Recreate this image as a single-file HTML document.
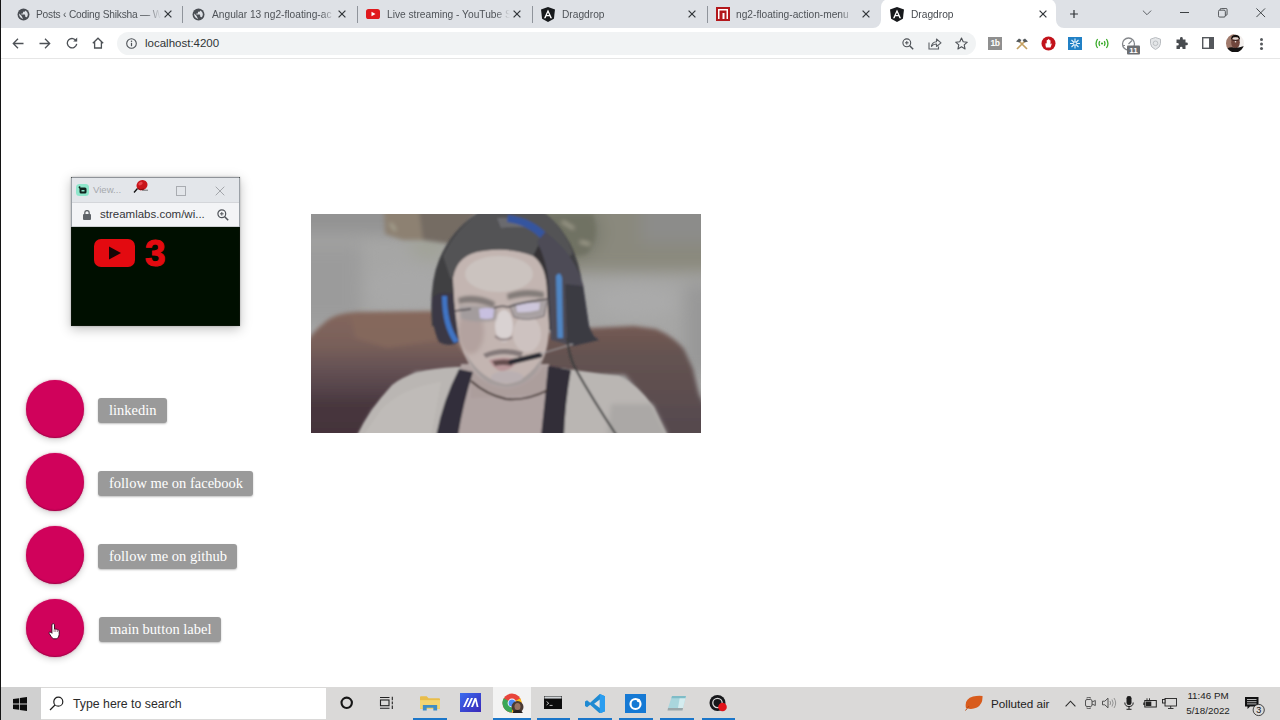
<!DOCTYPE html>
<html lang="en">
<head>
<meta charset="utf-8">
<title>Dragdrop</title>
<style>
*{box-sizing:border-box;margin:0;padding:0}
html,body{width:1280px;height:720px;overflow:hidden;background:#fff}
body{position:relative;font-family:"Liberation Sans",sans-serif;color:#3c4043}
.abs{position:absolute}
#leftline{left:0;top:0;width:1px;height:720px;background:#141414}
/* ---------- tab strip ---------- */
#tabstrip{left:0;top:0;width:1280px;height:28px;background:#dee1e6}
.tab{position:absolute;top:0;height:28px;font-size:10.200px;color:#4f5358;white-space:nowrap}
.tab .t{position:absolute;top:6.500px;left:0;overflow:hidden;height:15px;line-height:15px;-webkit-mask-image:linear-gradient(90deg,#000 calc(100% - 14px),transparent);mask-image:linear-gradient(90deg,#000 calc(100% - 14px),transparent)}
.tab .x{position:absolute;top:7px;font-size:10px;line-height:15px;color:#3c4043}
.tsep{position:absolute;top:6px;width:1px;height:17px;background:#8f949b}
#activetab{left:881px;top:-1px;width:175px;height:30px;background:#fff;border-radius:8px 8px 0 0}
/* ---------- toolbar ---------- */
#toolbar{left:0;top:28px;width:1280px;height:30px;background:#fff}
#omni{left:117px;top:32px;width:859px;height:23px;border-radius:12px;background:#f1f3f4}
#url{left:145px;top:36px;font-size:11.500px;line-height:15px;color:#303336}
#tbline{left:0;top:58px;width:1280px;height:1px;background:#e6e6e6}
/* ---------- page ---------- */
.fab{position:absolute;width:58px;height:58px;border-radius:50%;background:#d0025b;box-shadow:0 2px 7px rgba(0,0,0,.2),0 0 1.500px rgba(230,60,130,.8),inset 0 -1px 1px rgba(110,0,50,.45)}
.lbl{position:absolute;height:25px;line-height:24px;padding:0 10px 0 11px;background:#9a9a9a;color:#fff;border-radius:3px;font-family:"Liberation Serif",serif;font-size:14.500px;white-space:nowrap;box-shadow:0 1px 2px rgba(0,0,0,.25)}
/* ---------- popup ---------- */
#pop{left:71px;top:177px;width:168.500px;height:148.500px;background:#000f00;box-shadow:0 3px 11px rgba(0,0,0,.25),0 0 2px rgba(0,0,0,.25);border:1px solid #0a1408;border-top-color:#8f9399}
#poptitle{left:0;top:0;width:167px;height:24px;background:#e3e6ea}
#popurl{left:0;top:24px;width:167px;height:25px;background:#f3f4f6;border-top:1px solid #d4d6da;border-bottom:1px solid #cfd1d4}
/* ---------- taskbar ---------- */
#taskbar{left:0;top:687px;width:1280px;height:33px;background:#dad9d8}
#startbtn{left:1px;top:687px;width:40px;height:33px;background:#d0d0d0}
#search{left:41px;top:688px;width:285px;height:31px;background:#fff}
#searchtxt{left:73px;top:696px;font-size:12.300px;line-height:16px;color:#2b2b2b}
.ul{position:absolute;top:717.700px;height:2.300px;background:#1b76c9}
.tray{position:absolute;font-size:11.5px;color:#222;white-space:nowrap}
</style>
</head>
<body>
<div id="tabstrip" class="abs"></div>

<!-- tabs -->
<div id="activetab" class="abs"></div>
<svg class="abs" style="left:873px;top:20px" width="8" height="8" viewBox="0 0 8 8"><path d="M8 0V8H0A8 8 0 0 0 8 0Z" fill="#fff"/></svg>
<svg class="abs" style="left:1056px;top:20px" width="8" height="8" viewBox="0 0 8 8"><path d="M0 0V8H8A8 8 0 0 1 0 0Z" fill="#fff"/></svg>

<div class="tab" style="left:16px;width:166px">
  <svg class="abs" style="left:1px;top:8px" width="13" height="13" viewBox="0 0 24 24"><circle cx="12" cy="12" r="11" fill="#4a4e54"/><path d="M11 19.9c-3.9-.5-7-3.900-7-7.900 0-.6.100-1.200.2-1.800L9 15v1c0 1.100.9 2 2 2v1.900zm6.900-2.500c-.3-.8-1-1.400-1.900-1.400h-1v-3c0-.6-.4-1-1-1H8v-2h2c.6 0 1-.4 1-1V7h2c1.100 0 2-.9 2-2v-.4c2.900 1.200 5 4.100 5 7.400 0 2.100-.8 4-2.100 5.400z" fill="#dee1e6"/></svg>
  <span class="t" style="left:20px;width:125px;letter-spacing:-.2px">Posts ‹ Coding Shiksha — W</span>
  <svg class="abs" style="left:148px;top:10px" width="8" height="8" viewBox="0 0 8 8"><path d="M.6.600L7.400 7.400M7.400.6L.6 7.400" stroke="#33373b" stroke-width="1.250"/></svg>
</div>
<div class="tsep" style="left:182px"></div>
<div class="tab" style="left:191px;width:166px">
  <svg class="abs" style="left:1px;top:8px" width="13" height="13" viewBox="0 0 24 24"><circle cx="12" cy="12" r="11" fill="#4a4e54"/><path d="M11 19.9c-3.9-.5-7-3.900-7-7.900 0-.6.100-1.200.2-1.800L9 15v1c0 1.100.9 2 2 2v1.900zm6.900-2.500c-.3-.8-1-1.400-1.900-1.400h-1v-3c0-.6-.4-1-1-1H8v-2h2c.6 0 1-.4 1-1V7h2c1.100 0 2-.9 2-2v-.4c2.900 1.200 5 4.100 5 7.400 0 2.100-.8 4-2.100 5.400z" fill="#dee1e6"/></svg>
  <span class="t" style="left:21px;width:123px">Angular 13 ng2-floating-ac</span>
  <svg class="abs" style="left:147px;top:10px" width="8" height="8" viewBox="0 0 8 8"><path d="M.6.600L7.400 7.400M7.400.6L.6 7.400" stroke="#33373b" stroke-width="1.250"/></svg>
</div>
<div class="tsep" style="left:357px"></div>
<div class="tab" style="left:366px;width:166px">
  <svg class="abs" style="left:0;top:9px" width="14" height="10" viewBox="0 0 14 10"><rect width="14" height="10" rx="2.600" fill="#e0191d"/><path d="M5.500 2.700V7.300L9.500 5Z" fill="#fff"/></svg>
  <span class="t" style="left:21px;width:123px">Live streaming - YouTube S</span>
  <svg class="abs" style="left:147px;top:10px" width="8" height="8" viewBox="0 0 8 8"><path d="M.6.600L7.400 7.400M7.400.6L.6 7.400" stroke="#33373b" stroke-width="1.250"/></svg>
</div>
<div class="tsep" style="left:532px"></div>
<div class="tab" style="left:541px;width:166px">
  <svg class="abs" style="left:0;top:7px" width="14" height="15" viewBox="0 0 14 15"><path d="M7 0L0 2.500L1.100 11.700L7 15L12.900 11.700L14 2.500Z" fill="#17191c"/><path d="M7 2.500L3 11.300H4.600L5.400 9.300H8.600L9.400 11.300H11L7 2.500ZM7 5.500L8.100 8H5.900Z" fill="#fff"/></svg>
  <span class="t" style="left:21px;width:123px">Dragdrop</span>
  <svg class="abs" style="left:147px;top:10px" width="8" height="8" viewBox="0 0 8 8"><path d="M.6.600L7.400 7.400M7.400.6L.6 7.400" stroke="#33373b" stroke-width="1.250"/></svg>
</div>
<div class="tsep" style="left:707px"></div>
<div class="tab" style="left:716px;width:166px">
  <svg class="abs" style="left:0;top:7px" width="14" height="14" viewBox="0 0 14 14"><rect width="14" height="14" fill="#b3181c"/><rect x="2" y="2" width="10" height="10" fill="#fff"/><rect x="3.500" y="3.500" width="7" height="8.500" fill="#b3181c"/><rect x="6.500" y="6" width="2" height="6" fill="#fff"/></svg>
  <span class="t" style="left:20px;width:118px">ng2-floating-action-menu</span>
  <svg class="abs" style="left:146px;top:10px" width="8" height="8" viewBox="0 0 8 8"><path d="M.6.600L7.400 7.400M7.400.6L.6 7.400" stroke="#33373b" stroke-width="1.250"/></svg>
</div>
<div class="tab" style="left:890px;width:166px;color:#474b50">
  <svg class="abs" style="left:0;top:7px" width="14" height="15" viewBox="0 0 14 15"><path d="M7 0L0 2.500L1.100 11.700L7 15L12.900 11.700L14 2.500Z" fill="#17191c"/><path d="M7 2.500L3 11.300H4.600L5.400 9.300H8.600L9.400 11.300H11L7 2.500ZM7 5.500L8.100 8H5.900Z" fill="#fff"/></svg>
  <span class="t" style="left:21px;width:123px">Dragdrop</span>
  <svg class="abs" style="left:148.700px;top:10px" width="8" height="8" viewBox="0 0 8 8"><path d="M.6.600L7.400 7.400M7.400.6L.6 7.400" stroke="#33373b" stroke-width="1.250"/></svg>
</div>
<!-- window controls -->
<svg class="abs" style="left:1069px;top:9px" width="10" height="10" viewBox="0 0 14 14"><path d="M7 1.500V12.500M1.500 7H12.500" stroke="#2f3337" stroke-width="1.700" fill="none"/></svg>
<svg class="abs" style="left:1141.500px;top:10px" width="10" height="6" viewBox="0 0 11 7"><path d="M.7.700L5.500 5.500L10.300.7" stroke="#55595e" stroke-width="1.100" fill="none"/></svg>
<div class="abs" style="left:1180px;top:12px;width:9px;height:1px;background:#3c4043"></div>
<svg class="abs" style="left:1218px;top:8px" width="9.500" height="9.500" viewBox="0 0 11 11"><rect x=".5" y="2.500" width="8" height="8" rx="1.500" fill="none" stroke="#3c4043"/><path d="M2.500 2.500V1.800Q2.500.5 3.800.5H9.200Q10.500.5 10.500 1.800V7.200Q10.500 8.500 9.200 8.500H8.500" fill="none" stroke="#3c4043"/></svg>
<svg class="abs" style="left:1256px;top:8px" width="9.500" height="9.500" viewBox="0 0 11 11"><path d="M.5.500L10.500 10.500M10.500.5L.5 10.500" stroke="#3c4043" stroke-width="1.100" fill="none"/></svg>
<div id="toolbar" class="abs"></div>
<div id="omni" class="abs"></div>
<div id="url" class="abs">localhost:4200</div>
<div id="tbline" class="abs"></div>
<!-- toolbar icons -->
<svg class="abs" style="left:12px;top:38px" width="12" height="11" viewBox="0 0 12 11"><path d="M11.500 5.500H1.500M6 .8L1.300 5.500L6 10.200" fill="none" stroke="#4d5156" stroke-width="1.300"/></svg>
<svg class="abs" style="left:39px;top:38px" width="12" height="11" viewBox="0 0 12 11"><path d="M.5 5.500H10.500M6 .8L10.700 5.500L6 10.200" fill="none" stroke="#4d5156" stroke-width="1.300"/></svg>
<svg class="abs" style="left:66px;top:37px" width="12" height="12" viewBox="0 0 12 12"><path d="M10.300 4.200A4.700 4.700 0 1 0 10.700 6.800" fill="none" stroke="#4d5156" stroke-width="1.300"/><path d="M11.200.6V4.600H7.200Z" fill="#4d5156"/></svg>
<svg class="abs" style="left:92px;top:37px" width="12" height="12" viewBox="0 0 12 12"><path d="M.8 6.200L6 1.200L11.200 6.200M2.600 5V11H9.400V5" fill="none" stroke="#4d5156" stroke-width="1.300"/></svg>
<svg class="abs" style="left:126px;top:38px" width="11" height="11" viewBox="0 0 11 11"><circle cx="5.500" cy="5.500" r="4.800" fill="none" stroke="#4d5156" stroke-width="1.100"/><path d="M5.500 4.800V8.200" stroke="#4d5156" stroke-width="1.200"/><circle cx="5.500" cy="3.200" r=".75" fill="#4d5156"/></svg>
<svg class="abs" style="left:902px;top:38px" width="12" height="12" viewBox="0 0 12 12"><circle cx="4.800" cy="4.800" r="3.900" fill="none" stroke="#4d5156" stroke-width="1.100"/><path d="M7.700 7.700L11.200 11.200" stroke="#4d5156" stroke-width="1.400"/><path d="M3 4.800H6.600M4.800 3V6.600" stroke="#4d5156" stroke-width="1"/></svg>
<svg class="abs" style="left:928px;top:37px" width="14" height="13" viewBox="0 0 14 13"><path d="M1 5.500V12H10.500V9.500" fill="none" stroke="#5b5f64" stroke-width="1.100"/><path d="M3.500 9.500Q4 5 8.500 4.700V2L13 5.800L8.500 9.500V7Q5.500 6.800 3.500 9.500Z" fill="none" stroke="#5b5f64" stroke-width="1.100" stroke-linejoin="round"/></svg>
<svg class="abs" style="left:955px;top:37px" width="13" height="13" viewBox="0 0 13 13"><path d="M6.500 1L8.200 4.800L12.300 5.200L9.200 7.900L10.100 12L6.500 9.800L2.900 12L3.800 7.900L.7 5.200L4.800 4.800Z" fill="none" stroke="#4d5156" stroke-width="1.100" stroke-linejoin="round"/></svg>
<div class="abs" style="left:988px;top:37px;width:14px;height:13px;background:#8f8f8f;color:#fff;font-size:8.500px;font-weight:bold;line-height:13px;text-align:center;letter-spacing:-.5px">1b</div>
<svg class="abs" style="left:1015px;top:37px" width="14" height="13" viewBox="0 0 14 13"><path d="M2 12L10.500 3.500M12 12L3.500 3.500" stroke="#c4a061" stroke-width="1.700"/><path d="M1 4.500L4 1.500L6.500 3L4.500 5.500Z" fill="#54595c"/><path d="M13 4.500L10 1.500L7.500 3L9.500 5.500Z" fill="#54595c"/></svg>
<svg class="abs" style="left:1041px;top:36px" width="15" height="15" viewBox="0 0 15 15"><circle cx="7.500" cy="7.500" r="7" fill="#c2131b"/><path d="M5 11.500Q4 9 4.700 7L5.700 7.500V4.500Q6.200 3.200 7 4.300V3.500Q7.700 2.500 8.300 3.600V4.200Q9.200 3.400 9.500 4.800V8.500Q10.500 7 10.800 7.800Q10 10.500 9.500 11.500Z" fill="#fff"/></svg>
<svg class="abs" style="left:1068px;top:37px" width="14" height="13" viewBox="0 0 14 13"><rect width="14" height="13" fill="#2181c6"/><g stroke="#e8f3fb" stroke-width="1.100"><path d="M7 1.500V11.500M2 6.500H12M3.500 3L10.500 10M10.500 3L3.500 10"/></g><circle cx="7" cy="6.500" r="1.600" fill="#2181c6" stroke="#e8f3fb" stroke-width=".8"/></svg>
<svg class="abs" style="left:1095px;top:38px" width="14" height="11" viewBox="0 0 14 11"><g fill="none" stroke="#3dac2d" stroke-width="1.300"><path d="M4.800 3.200Q3.300 5.500 4.800 7.800M9.200 3.200Q10.700 5.500 9.200 7.800M2.600 1Q-.5 5.500 2.600 10M11.400 1Q14.500 5.500 11.400 10"/></g><circle cx="7" cy="5.500" r="1.100" fill="#3dac2d"/></svg>
<svg class="abs" style="left:1121px;top:37px" width="20" height="18" viewBox="0 0 20 18"><circle cx="7.500" cy="7" r="6" fill="none" stroke="#85888c" stroke-width="1.300"/><path d="M7.500 7L11 3.500M2 8.500H4" stroke="#85888c" stroke-width="1.200"/><rect x="6" y="8.500" width="13" height="9" rx="1" fill="#6d6f72"/><text x="12.500" y="16" font-family="Liberation Sans, sans-serif" font-size="8" font-weight="bold" fill="#fff" text-anchor="middle">11</text></svg>
<svg class="abs" style="left:1150px;top:37px" width="11" height="13" viewBox="0 0 11 13"><path d="M5.500.5L10.500 2.200V6.500Q10.300 10.500 5.500 12.500Q.7 10.500.5 6.500V2.200Z" fill="#e4e6e8" stroke="#b9bcc0" stroke-width="1"/><circle cx="5.500" cy="6.300" r="2.300" fill="none" stroke="#b9bcc0" stroke-width=".9"/></svg>
<svg class="abs" style="left:1175px;top:37px" width="13" height="13" viewBox="0 0 13 13"><path d="M5 1.500A1.400 1.400 0 0 1 7.800 1.500V2.500H10.500V5.500H11.500A1.400 1.400 0 0 1 11.500 8.300H10.500V12H7.500V11A1.300 1.300 0 0 0 4.900 11V12H1.500V8.500H2.500A1.300 1.300 0 0 0 2.500 5.900H1.500V2.500H5Z" fill="#484b4f"/></svg>
<svg class="abs" style="left:1202px;top:37px" width="12" height="12" viewBox="0 0 12 12"><rect x=".7" y=".7" width="10.600" height="10.600" fill="none" stroke="#55585c" stroke-width="1.400"/><rect x="7" y=".7" width="4.300" height="10.600" fill="#55585c"/></svg>
<svg class="abs" style="left:1226px;top:33.500px" width="18" height="18.500" viewBox="0 0 18 18.500"><defs><clipPath id="avc"><ellipse cx="9" cy="9.250" rx="9" ry="9.250"/></clipPath></defs><g clip-path="url(#avc)"><rect width="18" height="18.500" fill="#f3efed"/><path d="M0 0H8.500L7 15H0Z" fill="#a07a6c"/><ellipse cx="9.500" cy="8.500" rx="4.300" ry="6" fill="#70463c"/><path d="M5 7Q4.500 .8 9.500 .8Q14.500 .8 14 7Q13.500 3.200 9.500 3.200Q5.500 3.200 5 7Z" fill="#15100e"/><ellipse cx="9.500" cy="4.600" rx="3" ry="1.300" fill="#e6dbd5"/><circle cx="9.500" cy="7.800" r=".8" fill="#f4ece8"/><path d="M6.500 6.300H12.500" stroke="#2a1a16" stroke-width=".8"/><path d="M1 14.500Q5 12.500 9 14Q14 13.500 18 12V18.500H1Z" fill="#141212"/></g></svg>
<div class="abs" style="left:1260px;top:38px;width:3px;height:3px;border-radius:50%;background:#55585c;box-shadow:0 4.500px 0 #55585c,0 9px 0 #55585c"></div>


<!-- page content -->
<div class="fab" style="left:25.500px;top:380px"></div>
<div class="fab" style="left:25.500px;top:453px"></div>
<div class="fab" style="left:25.500px;top:526px"></div>
<div class="fab" style="left:26px;top:599px"></div>
<svg class="abs" style="left:48px;top:623px" width="14" height="17" viewBox="0 0 14 17"><path d="M3.900 1.400Q5.200 -.2 6.500 1.400V6.200Q7.200 5.500 7.800 6.400Q8.800 5.700 9.500 6.900Q10.800 6.500 11.200 7.800V11.500Q11 14.500 8.800 15.800H5.200Q3.200 14 1.200 10.500Q.6 9.200 1.800 9Q3 9 3.900 10.300Z" fill="#fff" stroke="#30061a" stroke-width=".9" stroke-linejoin="round"/><path d="M6.100 6.500V9M7.800 7V9M9.500 7.500V9" stroke="#6b2a45" stroke-width=".6"/></svg>
<div class="lbl" style="left:98px;top:398px">linkedin</div>
<div class="lbl" style="left:98px;top:471px">follow me on facebook</div>
<div class="lbl" style="left:98px;top:544px">follow me on github</div>
<div class="lbl" style="left:99px;top:617px">main button label</div>


<!-- webcam photo -->
<svg id="photo" class="abs" style="left:311px;top:214px" width="390" height="219" viewBox="0 0 390 219">
<defs>
  <filter id="b1" x="-10%" y="-10%" width="120%" height="120%"><feGaussianBlur stdDeviation="0.900"/></filter>
  <filter id="b2" x="-10%" y="-10%" width="120%" height="120%"><feGaussianBlur stdDeviation="2"/></filter>
  <filter id="b3" x="-20%" y="-20%" width="140%" height="140%"><feGaussianBlur stdDeviation="3.500"/></filter>
  <filter id="b8" x="-30%" y="-30%" width="160%" height="160%"><feGaussianBlur stdDeviation="8"/></filter>
  <clipPath id="pc"><rect width="390" height="219"/></clipPath>
  <linearGradient id="pl" gradientUnits="userSpaceOnUse" x1="0" y1="98" x2="0" y2="219"><stop offset="0" stop-color="#84675c"/><stop offset=".27" stop-color="#79605a"/><stop offset=".42" stop-color="#6a5556"/><stop offset=".6" stop-color="#59474d"/><stop offset=".77" stop-color="#48373e"/><stop offset="1" stop-color="#44333a"/></linearGradient>
  <linearGradient id="pr" gradientUnits="userSpaceOnUse" x1="0" y1="113" x2="0" y2="219"><stop offset="0" stop-color="#745a52"/><stop offset=".25" stop-color="#655351"/><stop offset=".8" stop-color="#594c50"/><stop offset="1" stop-color="#55484d"/></linearGradient>
</defs>
<g clip-path="url(#pc)">
  <rect width="390" height="219" fill="#a6a6a5"/>
  <!-- wall shading -->
  <g filter="url(#b8)">
    <rect x="-20" y="-20" width="120" height="40" fill="#939393"/>
    <rect x="-20" y="30" width="70" height="80" fill="#9b9b9b"/>
    <ellipse cx="95" cy="75" rx="40" ry="22" fill="#a8a8a8"/>
    <rect x="225" y="-20" width="190" height="78" fill="#8a897d"/>
    <rect x="330" y="-20" width="80" height="50" fill="#8c8c8a"/>
    <ellipse cx="325" cy="88" rx="42" ry="16" fill="#aaaaaa"/>
    <rect x="374" y="70" width="40" height="90" fill="#989898"/>
    <path d="M96 22L138 22L132 46L104 44Z" fill="#a1a398"/>
    <ellipse cx="258" cy="18" rx="34" ry="28" fill="#7c7d70"/>
  </g>
  <g filter="url(#b2)">
    <path d="M73 -4L140 -4L136 26L92 26L74 20Z" fill="#8d8172"/><path d="M108 -4L168 -4L140 30L112 26Z" fill="#756c64"/>
    <path d="M228 0L282 0Q290 24 276 40Q260 46 246 34Z" fill="#6f7062" opacity=".85"/>
    <path d="M80 10L84 16M252 8L262 14M270 28L278 30" stroke="#aaa795" stroke-width="2.500" stroke-linecap="round"/>
  </g>
  <!-- pillows -->
  <g filter="url(#b2)">
    <path d="M-8 226V134Q1 118 12 110Q22 99 46 98L128 97L170 110L176 160L105 158L62 196L44 228Z" fill="url(#pl)"/>
    <path d="M40 101L124 99L130 126L76 134L44 124Z" fill="#87695c" opacity=".75"/>
    <path d="M220 120L282 114L323 112L345 115Q362 122 373 135L382 155L388 180L398 200V228H352L340 193L314 161L222 160Z" fill="url(#pr)"/>
  </g>
  <g filter="url(#b1)">
    <!-- body -->
    <path d="M46 222Q58 196 81 171Q100 155 145 153L250 154L290 160L308 162Q326 170 343 193L357 222Z" fill="#bab6b3"/>
    <path d="M300 190L341 190L357 222H296Z" fill="#aba8a6" filter="url(#b2)"/>
    <path d="M150 150L238 150L240 222H140Z" fill="#b0a3a2"/>
    <path d="M70 196Q90 174 130 168L120 222H52Z" fill="#bfbbb8"/>
    <!-- hair -->
    <path d="M121 112Q118 70 128 46Q140 16 168 -2L232 -2Q262 20 270 62L276 112L240 118L235 76L195 36L150 44L142 64L146 116Z" fill="#414043"/>
    <path d="M132 42Q144 16 168 -2L232 -2Q255 15 262 40L232 60Q215 38 190 36Q160 36 146 52L140 66Z" fill="#525254"/>
    <path d="M186 4Q204 2 220 14Q206 12 190 14Z" fill="#6a6a6e"/>
    <path d="M222 42Q236 50 236 80L238 116L250 116L246 60Q240 40 228 30Z" fill="#343336"/>
    <!-- face -->
    <path d="M142 64Q146 40 172 37Q200 33 222 42Q236 52 236 80L238 112Q238 140 226 156Q212 172 195 173Q172 172 158 150Q146 130 144 100Z" fill="#c3b5b1"/>
    <ellipse cx="188" cy="60" rx="34" ry="18" fill="#cbc3bf"/>
    <ellipse cx="160" cy="118" rx="13" ry="22" fill="#b3a29f" filter="url(#b2)"/>
    <ellipse cx="193" cy="112" rx="9" ry="16" fill="#d9d2d2"/>
    <ellipse cx="216" cy="120" rx="14" ry="18" fill="#cdc2c0"/>
    <path d="M154 138Q170 166 195 170Q216 168 232 142Q228 160 212 169Q196 177 178 169Q160 158 154 138Z" fill="#a59d9c"/>
    <ellipse cx="196" cy="163" rx="16" ry="6" fill="#bab0b2"/>
    <!-- neck -->
    <path d="M160 156Q176 174 196 175Q218 173 234 152L238 180L160 184Z" fill="#ac9e9c"/>
    <!-- brows / glasses -->
    <g filter="url(#b1)">
    <path d="M147 84Q164 78 184 88L183 94Q164 86 148 90Z" fill="#837c79"/>
    <path d="M196 80Q214 73 233 78L233 84Q214 80 197 86Z" fill="#827b78"/>
    <path d="M148 92Q170 90 186 95L185 106Q168 110 150 105Z" fill="#a39c9d"/>
    <path d="M200 90Q218 85 236 86L233 102Q216 107 203 103Z" fill="#a8a1a3"/>
    </g>
    <path d="M168 95Q176 93 183 95L182 104Q175 106 169 104Z" fill="#c8c0e0"/>
    <path d="M205 91Q218 88 229 89L228 96Q216 99 206 98Z" fill="#cdc6da"/>
    <path d="M143 97L160 95M183 94Q190 91 197 93Q216 87 238 85" stroke="#4a4549" stroke-width="1.500" fill="none"/>
    <path d="M203 103Q216 108 233 102L236 87M199 93L203 103" stroke="#6d676b" stroke-width="1" fill="none"/>
    <!-- nose & mouth -->
    <path d="M184 122Q192 129 201 123" stroke="#9a8c8c" stroke-width="2.400" fill="none"/>
    <path d="M172 140Q191 131 212 138L210 143Q191 137 175 144Z" fill="#857a7a"/>
    <path d="M178 146Q192 141 207 146Q201 157 190 157Q182 155 178 146Z" fill="#b89699"/>
    <path d="M181 147Q192 144 205 147L200 152Q192 150 184 152Z" fill="#66504f"/>
    <!-- headphones -->
    <path d="M197 1Q222 4 238 22L232 27Q218 11 196 8Z" fill="#34549f"/>
    <path d="M234 18Q262 38 272 70L278 112Q282 124 288 126L262 132L240 126L238 80Q238 50 226 28Z" fill="#4d4c57"/>
    <path d="M254 70L272 72L278 112Q282 124 288 126L262 132L256 126Z" fill="#3b3b43"/>
    <path d="M245 62Q249 56 251 64L252 124L246.500 124Z" fill="#4f86c4"/>
    <path d="M121 84Q128 76 142 80L148 128Q138 134 128 128Q120 112 121 84Z" fill="#3a3944"/>
    <path d="M131 82L136 82Q136 110 148 127L143 129Q131 112 131 82Z" fill="#3f74c4"/>
    <!-- mic -->
    <path d="M200 148L229 141" stroke="#2c2b30" stroke-width="5" stroke-linecap="round"/>
    <path d="M229 140L262 130" stroke="#a3a2a5" stroke-width="1.300"/>
    <!-- cable -->
    <path d="M256 124Q258 142 264 154Q282 186 306 222" stroke="#3e3e3e" stroke-width="2.100" fill="none"/>
    <!-- straps -->
    <path d="M148 155L162 158Q152 190 147 222H125Q132 186 148 155Z" fill="#322f3a"/>
    <path d="M237 152L260 156Q254 190 253 222H230Q234 186 237 152Z" fill="#302d38"/>
    <!-- necklace -->
    <path d="M160 167Q176 181 195 185Q216 187 237 176" stroke="#3e302d" stroke-width="1.800" fill="none"/>
  </g>
</g>
</svg>
<!-- popup window -->
<div id="pop" class="abs">
  <div id="poptitle" class="abs"></div>
  <div id="popurl" class="abs"></div>
  <div class="abs" style="left:-1px;top:0;width:1px;height:49px;background:#9aa0a6"></div><div class="abs" style="left:167px;top:0;width:1px;height:49px;background:#9aa0a6"></div>
  <svg class="abs" style="left:4px;top:6px" width="13" height="12" viewBox="0 0 13 12"><rect x="0" y="0" width="13" height="12" rx="3.500" fill="#8ee6cb"/><path d="M2.500 3.500Q2.700 2 4.300 2.300L4.300 3.500H9Q10.500 3.500 10.500 5V8Q10.500 9.500 9 9.500H5Q3.500 9.500 3.500 8V5Q3.500 4.300 2.500 3.500Z" fill="#10231e"/><rect x="5.500" y="6" width="3" height="1.500" fill="#8ee6cb"/></svg>
  <div class="abs" style="left:21px;top:6px;font-size:9.600px;line-height:12px;color:#a6a9ad">View...</div>
  <svg class="abs" style="left:61px;top:1px" width="16" height="15" viewBox="0 0 16 15"><path d="M1 13.500L4.500 9.500" stroke="#111" stroke-width="1.400"/><path d="M9 11.200H15" stroke="#222" stroke-width=".6"/><ellipse cx="9" cy="6.200" rx="5.600" ry="5" transform="rotate(-28 9 6.200)" fill="#c9141a"/><ellipse cx="7.500" cy="4.600" rx="2.300" ry="1.500" transform="rotate(-28 7.500 4.600)" fill="#e8434a"/><path d="M4.500 9.500Q7 11.500 11 10" stroke="#6b0a0d" stroke-width=".8" fill="none"/></svg>
  <svg class="abs" style="left:104px;top:8px" width="10" height="10" viewBox="0 0 10 10"><rect x=".5" y=".5" width="9" height="9" fill="none" stroke="#a9acb1"/></svg>
  <svg class="abs" style="left:143px;top:8px" width="10" height="10" viewBox="0 0 10 10"><path d="M.7.700L9.300 9.300M9.300.7L.7 9.300" stroke="#a3a6ab" stroke-width="1"/></svg>
  <svg class="abs" style="left:11px;top:32px" width="8" height="10" viewBox="0 0 8 10"><rect x="0" y="4" width="8" height="6" rx="1" fill="#5f6368"/><path d="M1.800 4.500V2.800A2.200 2.200 0 0 1 6.200 2.800V4.500" fill="none" stroke="#5f6368" stroke-width="1.300"/></svg>
  <div class="abs" style="left:28px;top:29px;font-size:11.500px;line-height:14px;color:#33363a;white-space:nowrap">streamlabs.com/wi...</div>
  <svg class="abs" style="left:145px;top:31px" width="12" height="12" viewBox="0 0 12 12"><circle cx="4.800" cy="4.800" r="3.900" fill="none" stroke="#50545a" stroke-width="1.200"/><path d="M7.700 7.700L11.200 11.200" stroke="#50545a" stroke-width="1.500"/><path d="M3 4.800H6.600M4.800 3V6.600" stroke="#50545a" stroke-width="1"/></svg>
  <svg class="abs" style="left:22px;top:61px" width="41" height="28" viewBox="0 0 41 28"><rect x="0" y="0" width="41" height="28" rx="7" fill="#e30a10"/><path d="M15 7.500V20.500L27 14Z" fill="#160606"/></svg>
  <div class="abs" style="left:73px;top:56px;font-size:37px;line-height:40px;font-weight:bold;color:#e30a10;-webkit-text-stroke:1px #e30a10">3</div>
</div>
<div id="taskbar" class="abs"></div>
<div id="startbtn" class="abs"></div>
<div id="search" class="abs"></div>
<div id="searchtxt" class="abs">Type here to search</div>

<!-- taskbar items -->
<svg class="abs" style="left:13px;top:697px" width="14" height="14" viewBox="0 0 14 14"><path d="M0 2L6 1.200V6.600H0ZM6.800 1.100L14 0V6.600H6.800ZM0 7.400H6V12.800L0 12ZM6.800 7.400H14V14L6.800 12.900Z" fill="#0c0c0c"/></svg>
<svg class="abs" style="left:49px;top:696px" width="15" height="15" viewBox="0 0 15 15"><circle cx="9.300" cy="5.700" r="4.500" fill="none" stroke="#1f1f1f" stroke-width="1.200"/><path d="M6 9L1 14" stroke="#1f1f1f" stroke-width="1.300"/></svg>
<svg class="abs" style="left:339px;top:695px" width="16" height="16" viewBox="0 0 16 16"><circle cx="7.700" cy="7.800" r="5.200" fill="none" stroke="#161616" stroke-width="2.100"/></svg>
<svg class="abs" style="left:379px;top:696px" width="16" height="14" viewBox="0 0 16 14"><g fill="none" stroke="#222" stroke-width="1.100"><rect x="1.500" y="4" width="8.500" height="5.700"/><path d="M1 1.500H10.500M1 12.200H10.500M13.300 .8V4.200M13.300 5.500V8.200M13.300 9.500V13"/></g></svg>
<svg class="abs" style="left:420px;top:694.500px" width="20" height="16" viewBox="0 0 21 16"><path d="M0 2Q0 1 1 1H7L9 3H20Q21 3 21 4V14H0Z" fill="#e9bd4a"/><path d="M0 5H21V14H0Z" fill="#f3d572"/><path d="M3 10H18V16H14V13H7V16H3Z" fill="#3f8dc4"/></svg>
<svg class="abs" style="left:460px;top:693px" width="21" height="19" viewBox="0 0 21 19"><defs><linearGradient id="mag" x1="0" y1="0" x2="1" y2="1"><stop offset="0" stop-color="#3a6df0"/><stop offset="1" stop-color="#3a27b8"/></linearGradient></defs><rect width="21" height="19" fill="url(#mag)"/><path d="M3 14L7.200 5H9.200L5 14ZM6.800 14L11 5H13L8.800 14ZM11 14L14.500 5H16.300L18.500 14H16.700L15.400 8L13 14Z" fill="#fff"/></svg>
<div class="abs" style="left:492.500px;top:687px;width:38px;height:33px;background:#f3f3f3"></div>
<svg class="abs" style="left:502px;top:693px" width="22" height="20" viewBox="0 0 22 20"><circle cx="10" cy="10" r="9.500" fill="#e8453c"/><path d="M10 10L1.800 5.200A9.500 9.500 0 0 0 10 19.500Z" fill="#3aa757"/><path d="M10 10L10 19.500A9.500 9.500 0 0 0 18.200 5.200Z" fill="#fbc116"/><circle cx="10" cy="10" r="4.400" fill="#fff"/><circle cx="10" cy="10" r="3.500" fill="#4b8bf5"/><circle cx="15.500" cy="14" r="6" fill="#4a3a33"/><ellipse cx="15.500" cy="13.500" rx="3" ry="3.600" fill="#9a7462"/><path d="M10.500 20Q12 16.500 15.500 17Q19 16.500 21 20Z" fill="#262222"/></svg>
<svg class="abs" style="left:544px;top:695.500px" width="18" height="13.700" viewBox="0 0 21 16"><rect width="21" height="16" fill="#0c0c0c"/><rect x=".5" y=".5" width="20" height="2.500" fill="#cfd3d6"/><path d="M3 6.500L5.500 8.500L3 10.500M6.500 11H10" stroke="#eee" stroke-width=".9" fill="none"/></svg>
<svg class="abs" style="left:584.500px;top:693.500px" width="20.500" height="19.500" viewBox="0 0 18 17"><path d="M13 0L18 2.200V14.800L13 17L4.500 9.300L1.800 11.500L0 10.500V6.500L1.800 5.500L4.500 7.700Z" fill="#1f8ad2"/><path d="M13 4.800L8 8.500L13 12.200Z" fill="#e2e2e2"/><path d="M13 0L18 2.200V14.800L13 17Z" fill="#2a9df0"/></svg>
<svg class="abs" style="left:625px;top:694px" width="21" height="19" viewBox="0 0 21 19"><rect width="21" height="19" fill="#1579d4"/><circle cx="10.500" cy="10" r="5" fill="none" stroke="#fff" stroke-width="2.200"/><circle cx="13.500" cy="6.500" r="1.700" fill="#fff"/></svg>
<svg class="abs" style="left:666px;top:694.500px" width="21" height="17" viewBox="0 0 21 17"><path d="M6 1H20L17 13H2Z" fill="#a9d6dd"/><path d="M14 1H20L17 13H12Z" fill="#d4ecef"/><path d="M6 1H20L19.400 3.200H5.400Z" fill="#7fbcc7"/><path d="M2 13H17L16.500 15.500H1.500Z" fill="#9aa7aa"/></svg>
<svg class="abs" style="left:709px;top:695px" width="19" height="17" viewBox="0 0 19 17"><circle cx="8.500" cy="8" r="8" fill="#16171a"/><circle cx="8.500" cy="8" r="4.700" fill="none" stroke="#d8d8d8" stroke-width="1.300"/><circle cx="13.500" cy="12" r="4.300" fill="#e0121a"/></svg>
<div class="ul" style="left:412.500px;width:34px"></div>
<div class="ul" style="left:492.500px;width:38px"></div>
<div class="ul" style="left:536.500px;width:33.500px"></div>
<div class="ul" style="left:577.500px;width:34px"></div>
<div class="ul" style="left:619px;width:33.500px"></div>
<div class="ul" style="left:660px;width:34px"></div>
<div class="ul" style="left:701.500px;width:33.500px"></div>
<!-- tray -->
<svg class="abs" style="left:965px;top:695px" width="18" height="16" viewBox="0 0 18 16"><path d="M1 13Q-1 4 8 1.500Q13 .5 17.500 1Q18 9 12 12.500Q6 15 2 13Z" fill="#d85b1c"/><path d="M.5 15.500L4 11" stroke="#b8460f" stroke-width="1"/></svg>
<div class="tray" style="left:991px;top:696.200px;font-size:11.700px;line-height:15px">Polluted air</div>
<svg class="abs" style="left:1064.500px;top:699.500px" width="11" height="7" viewBox="0 0 11 7"><path d="M.6 6.300L5.500 1.200L10.400 6.300" fill="none" stroke="#2a2a2a" stroke-width="1.100"/></svg>
<svg class="abs" style="left:1085px;top:697px" width="11" height="12" viewBox="0 0 11 12"><g fill="none" stroke="#444" stroke-width=".9"><rect x=".5" y="2.500" width="6.500" height="7" rx="1.500"/><path d="M7 5L10.300 3.500V8.500L7 7M1.500 1Q3.700 -.2 6 1M1.500 11Q3.700 12.200 6 11"/></g></svg>
<svg class="abs" style="left:1102px;top:697px" width="15" height="12" viewBox="0 0 15 12"><g fill="none" stroke="#444" stroke-width=".9"><path d="M.5 4.200H2.800L6 1.200V10.800L2.800 7.800H.5Z"/><path d="M8 4Q9.300 6 8 8M10 2.500Q12.300 6 10 9.500M12 1Q15.300 6 12 11" stroke="#8a8a8a"/></g></svg>
<svg class="abs" style="left:1124px;top:696px" width="10" height="14" viewBox="0 0 10 14"><rect x="2.500" y="0" width="5" height="9" rx="2.300" fill="#1d1d1d"/><path d="M.8 6.500Q.8 10.500 5 10.500Q9.200 10.500 9.200 6.500M5 10.500V13M2.500 13.300H7.500" fill="none" stroke="#1d1d1d" stroke-width="1"/></svg>
<svg class="abs" style="left:1143px;top:698px" width="14" height="10" viewBox="0 0 14 10"><rect x="1.800" y="2.500" width="11.500" height="6.500" fill="none" stroke="#222" stroke-width="1"/><rect x=".3" y="4.500" width="1.500" height="2.500" fill="#222"/><rect x="2.800" y="3.500" width="5.500" height="4.500" fill="#222"/><path d="M4 .3V3M6.500 .3V3M3.300 2.500H7.300" stroke="#222" stroke-width=".9"/></svg>
<svg class="abs" style="left:1162px;top:698px" width="15" height="11" viewBox="0 0 15 11"><g fill="none" stroke="#222" stroke-width=".9"><rect x="3" y=".5" width="11.500" height="7.500"/><path d="M8.700 8V10M6 10.500H11.500"/><rect x=".5" y="1.500" width="2.500" height="3.500" fill="#dad9d8"/></g></svg>
<div class="tray" style="left:1178px;top:688.700px;width:60px;text-align:center;font-size:9.800px;line-height:13px">11:46 PM</div>
<div class="tray" style="left:1178px;top:704px;width:60px;text-align:center;font-size:9.800px;line-height:13px">5/18/2022</div>
<svg class="abs" style="left:1245px;top:697px" width="21" height="20" viewBox="0 0 21 20"><path d="M0 0H13.500V9.500H5L2.500 12V9.500H0Z" fill="#111"/><path d="M2 2.500H11.500M2 4.700H11.500M2 6.900H11.500" stroke="#e2e2e2" stroke-width=".8"/><circle cx="13.700" cy="13" r="5.600" fill="#dad9d8" stroke="#333" stroke-width=".9"/><text x="13.700" y="16.300" font-family="Liberation Sans, sans-serif" font-size="9" fill="#111" text-anchor="middle">3</text></svg>
<div id="leftline" class="abs"></div>
</body>
</html>
